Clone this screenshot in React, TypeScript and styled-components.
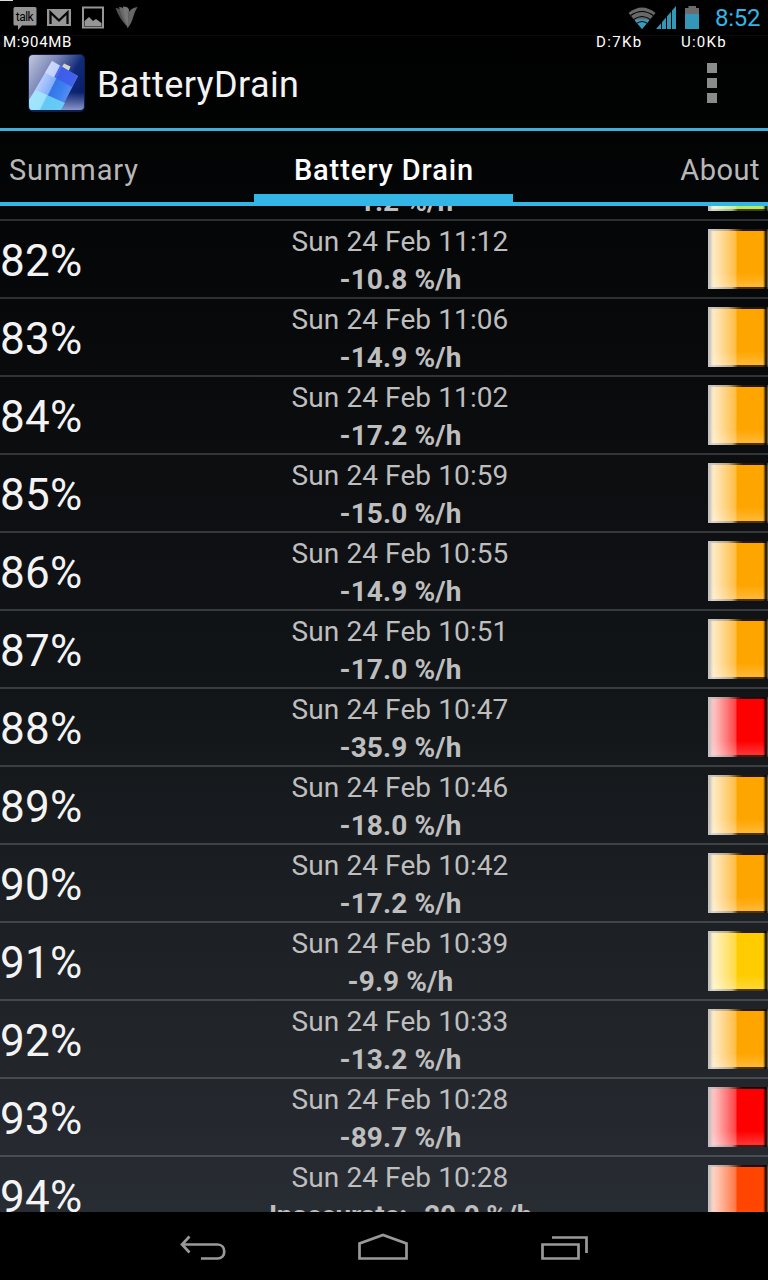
import React from "react";
import styled, { createGlobalStyle } from "styled-components";

const GlobalStyle = createGlobalStyle`
  * { box-sizing: border-box; }
  body { margin: 0; background: #000; overflow: hidden; font-family: Roboto, "Liberation Sans", sans-serif; }
`;

const Screen = styled.div`
  width: 768px;
  height: 1280px;
  display: flex;
  flex-direction: column;
  overflow: hidden;
  color: #f3f3f3;
  background: linear-gradient(#000 0, #020303 131px, #07080a 300px, #121518 690px, #1e2226 960px, #282c33 1212px);
`;

const StatusBar = styled.header`
  position: relative;
  flex: none;
  height: 36px;
  background: #000;
  border-bottom: 1px solid #0b0b0b;
  display: flex;
  justify-content: space-between;
`;

const Tray = styled.svg`
  display: block;
  flex: none;
`;

const StatusRight = styled.div`
  display: flex;
  padding-right: 8px;
`;

const Clock = styled.span`
  width: 45px;
  margin-left: 11px;
  font-size: 24px;
  line-height: 37px;
  letter-spacing: -0.25px;
  color: #33b5e5;
  white-space: nowrap;
`;

const Readout = styled.span<{ $left: number; $spacing: number }>`
  position: absolute;
  z-index: 2;
  left: ${(p) => p.$left}px;
  top: 33px;
  font-size: 15px;
  line-height: 18px;
  font-weight: 400;
  letter-spacing: ${(p) => p.$spacing}px;
  white-space: nowrap;
  color: #fff;
`;

const ActionBar = styled.div`
  flex: none;
  height: 95px;
  padding: 1px 51px 0 27px;
  border-bottom: 3px solid #41addb;
  display: flex;
  align-items: center;
`;

const AppTitle = styled.h1`
  flex: 1;
  margin: 5px 0 0 11px;
  font-size: 36px;
  line-height: 42px;
  font-weight: 400;
  letter-spacing: 0.4px;
`;

const Overflow = styled.div`
  display: grid;
  gap: 5px;
`;

const OverflowSquare = styled.i`
  width: 10px;
  height: 10px;
  background: #8b8b8b;
`;

const Tabs = styled.nav`
  flex: none;
  height: 75px;
  border-bottom: 4px solid #33b5e5;
  display: grid;
  grid-template-columns: 254px 259px 255px;
`;

const Tab = styled.div<{ $align: string; $active?: boolean }>`
  padding: 22px 8px 0 9px;
  text-align: ${(p) => p.$align};
  font-size: 29px;
  line-height: 34px;
  height: 71px;
  letter-spacing: ${(p) => (p.$align === "right" ? 0.5 : 0.9)}px;
  white-space: nowrap;
  color: ${(p) => (p.$active ? "#fff" : "#b8b8b8")};
  font-weight: ${(p) => (p.$active ? 500 : 400)};
  border-bottom: ${(p) => (p.$active ? "8px solid #33b5e5" : "0")};
`;

const List = styled.main`
  flex: none;
  height: 1006px;
  overflow: hidden;
`;

const Row = styled.div<{ $clipped?: boolean }>`
  height: 78px;
  margin-top: ${(p) => (p.$clipped ? "-63px" : "0")};
  border-bottom: 2px solid rgba(255, 255, 255, 0.17);
  display: grid;
  grid-template-columns: 92px 616px 60px;
`;

const Level = styled.div`
  font-size: 44px;
  line-height: 52px;
  padding-top: 14px;
  letter-spacing: 0.3px;
  white-space: nowrap;
`;

const Details = styled.div`
  color: #bebebe;
  text-align: center;
  font-size: 28px;
  line-height: 38px;
  padding-top: 2px;
`;

const Stamp = styled.div`
  height: 38px;
  letter-spacing: 0.1px;
`;

const Rate = styled.div<{ $tight: boolean }>`
  font-weight: 700;
  padding-left: 1px;
  letter-spacing: ${(p) => (p.$tight ? -0.28 : 0.1)}px;
`;

const Swatch = styled.div<{ $color: string }>`
  width: 60px;
  height: 60px;
  margin-top: 8px;
  background:
    linear-gradient(90deg, rgba(190,190,190,.9) 0 2px, rgba(190,190,190,.5) 3px, transparent 5px),
    linear-gradient(90deg, transparent 55px, rgba(0,0,0,.25) 56px, rgba(0,0,0,.95) 58px, rgba(100,100,100,.8) 60px),
    linear-gradient(90deg, rgba(200,200,200,.85), rgba(140,140,140,.6) 20px, rgba(0,0,0,.85) 35px) 0 0 / 100% 2px no-repeat,
    linear-gradient(90deg, rgba(220,220,220,.75), rgba(150,150,150,.7) 24px, rgba(40,20,10,.8) 30px) 0 100% / 100% 2px no-repeat,
    linear-gradient(transparent 44px, rgba(255,255,255,.2) 57px, rgba(255,255,255,.1)),
    linear-gradient(90deg, rgba(255,255,255,.82), rgba(255,255,255,.72) 8px, rgba(255,255,255,.26) 28px, transparent 29px),
    ${(p) => p.$color};
`;

const NavBar = styled.footer`
  flex: none;
  height: 68px;
  background: #000;
  display: flex;
  justify-content: center;
`;

const ORANGE = "#ffa500";
const entries = [
  ["", "", "-1.2 %/h", "#a5e635"],
  ["82%", "Sun 24 Feb 11:12", "-10.8 %/h", ORANGE],
  ["83%", "Sun 24 Feb 11:06", "-14.9 %/h", ORANGE],
  ["84%", "Sun 24 Feb 11:02", "-17.2 %/h", ORANGE],
  ["85%", "Sun 24 Feb 10:59", "-15.0 %/h", ORANGE],
  ["86%", "Sun 24 Feb 10:55", "-14.9 %/h", ORANGE],
  ["87%", "Sun 24 Feb 10:51", "-17.0 %/h", ORANGE],
  ["88%", "Sun 24 Feb 10:47", "-35.9 %/h", "#ff0000"],
  ["89%", "Sun 24 Feb 10:46", "-18.0 %/h", ORANGE],
  ["90%", "Sun 24 Feb 10:42", "-17.2 %/h", ORANGE],
  ["91%", "Sun 24 Feb 10:39", "-9.9 %/h", "#ffcc00"],
  ["92%", "Sun 24 Feb 10:33", "-13.2 %/h", ORANGE],
  ["93%", "Sun 24 Feb 10:28", "-89.7 %/h", "#ff0000"],
  ["94%", "Sun 24 Feb 10:28", "Inaccurate: -20.0 %/h", "#ff4500"],
];

function Notifications() {
  return (
    <Tray width="150" height="36" viewBox="0 0 150 36">
      <path d="M0 0h13v1H0z" fill="#ddd" />
      <path d="M15 7h20q1.500 0 1.500 1.500V24q0 1.500-1.500 1.500H22L18 30v-4.500h-3q-1.500 0-1.500-1.500V8.500Q13.500 7 15 7z" fill="#969696" />
      <text x="15.700" y="20.500" fontSize="12" fontWeight="400" fill="#000" textLength="18">talk</text>
      <path d="M47 9h24v17H47z" fill="#969696" />
      <path d="M50.500 24V12.500l8.500 8 8.500-8V24" fill="none" stroke="#080808" strokeWidth="2.300" />
      <path d="M83 7.500h20v20H83z" fill="none" stroke="#969696" strokeWidth="2" />
      <path d="M84.500 26v-5l4.500-4 4 4 3-2 5.500 4v3z" fill="#969696" />
      <path d="M115.500 8q4 0 6 3l5 15q-7-7-11-18z" fill="#505050" />
      <path d="M119 7q5 0 6 4l3 17q-5-7-9-21z" fill="#686868" />
      <path d="M123 6.500q5 0 6 3l-1 19q-4-12-5-22z" fill="#777" />
      <path d="M137.500 7q-7 1-9 6l-1 15q4-4 6-12 2-6 4-9z" fill="#666" />
    </Tray>
  );
}

function Connectivity() {
  return (
    <Tray width="76" height="36" viewBox="628 0 76 36">
      <defs>
        <clipPath id="wifi"><path d="M628.500 13q13.500-11 27 0L642 29z" /></clipPath>
      </defs>
      <g clipPath="url(#wifi)">
        <path d="M628 7h28v22h-28z" fill="#686868" />
        <path d="M635 19.500h14v9.500h-14z" fill="#389cbd" />
        <g fill="none" stroke="#000" strokeWidth="1.200">
          <path d="M630 16q12-9 24 0M633 20q9-7 18 0M636 24q6-5 12 0" />
        </g>
      </g>
      <path d="M656 29L676 6v23z" fill="#3597b8" />
      <path d="M661.500 21v8M666.500 15v14M671.500 10v19" stroke="#000" strokeWidth="1" />
      <path d="M688.500 6h7.500v2h3v6h-14V8h3.500z" fill="#6c6c6c" />
      <path d="M685 14h14v15h-14z" fill="#3597b8" />
    </Tray>
  );
}

function BatteryIcon() {
  return (
    <svg width="59" height="60" viewBox="0 0 59 60">
      <defs>
        <linearGradient id="tile" x1="0" y1="0" x2="1" y2=".65">
          <stop stopColor="#cbcfe1" /><stop offset=".4" stopColor="#7985b6" />
          <stop offset=".7" stopColor="#122b79" /><stop offset="1" stopColor="#061d69" />
        </linearGradient>
        <linearGradient id="shine" x1="0" y1="0" x2="0" y2="1">
          <stop offset=".65" stopColor="#a6b2e2" stopOpacity="0" /><stop offset="1" stopColor="#b1bbe9" stopOpacity=".9" />
        </linearGradient>
        <linearGradient id="cell" gradientUnits="userSpaceOnUse" x1="14" y1="28" x2="42" y2="42">
          <stop stopColor="#b4cbff" /><stop offset=".38" stopColor="#86aefa" />
          <stop offset=".42" stopColor="#3475e8" /><stop offset=".75" stopColor="#3c82f0" /><stop offset="1" stopColor="#5c8df0" />
        </linearGradient>
        <clipPath id="round"><rect x="2" y="2" width="55" height="55" rx="4" /></clipPath>
      </defs>
      <rect x="1" y="1" width="57" height="58" rx="5" fill="#101e48" />
      <g clipPath="url(#round)">
        <path d="M0 0h59v60H0z" fill="url(#tile)" />
        <path d="M0 0h59v60H0z" fill="url(#shine)" />
        <path d="M35 14l2-3.500 6.500 3-2 5z" fill="#d7d5ca" />
        <path d="M25 8l26 15-19 37H3L2 47z" fill="url(#cell)" />
        <path d="M33 12.500l18 10.500-6 11-18-10z" fill="#4058e8" opacity=".8" />
        <path d="M25 8l8 4.500-6 12-9-5z" fill="#dfe5ff" opacity=".6" />
        <path d="M9 37l29 13-6 10H3L2 47z" fill="#70dcf6" opacity=".8" />
        <path d="M9 37l11 5-9 18H3L2 47z" fill="#c5f2ff" opacity=".5" />
      </g>
    </svg>
  );
}

function NavigationIcons() {
  return (
    <svg width="430" height="68" viewBox="169 1212 430 68" fill="none" stroke="#999" strokeWidth="2.700">
      <path d="M182 1244.500h35.500c9 0 9 14 0 14h-16.500M189.500 1236.500l-7.500 8 7.500 8" />
      <path d="M359.500 1258.500v-15l23.500-8.500 23.500 8.500v15z" />
      <path d="M542.500 1244.500h36v14h-36zM552 1237.500h34.500v15.500" />
    </svg>
  );
}

export default function App() {
  return (
    <Screen>
      <GlobalStyle />
      <StatusBar>
        <Notifications />
        <StatusRight>
          <Connectivity />
          <Clock>8:52</Clock>
        </StatusRight>
        <Readout $left={3} $spacing={0.65}>M:904MB</Readout>
        <Readout $left={596} $spacing={1.35}>D:7Kb</Readout>
        <Readout $left={681} $spacing={1.25}>U:0Kb</Readout>
      </StatusBar>
      <ActionBar>
        <BatteryIcon />
        <AppTitle>BatteryDrain</AppTitle>
        <Overflow><OverflowSquare /><OverflowSquare /><OverflowSquare /></Overflow>
      </ActionBar>
      <Tabs>
        <Tab $align="left">Summary</Tab>
        <Tab $align="center" $active>Battery Drain</Tab>
        <Tab $align="right">About</Tab>
      </Tabs>
      <List>
        {entries.map(([level, stamp, rate, color], i) => (
          <Row key={i} $clipped={i === 0}>
            <Level>{level}</Level>
            <Details>
              <Stamp>{stamp}</Stamp>
              <Rate $tight={rate.length > 12}>{rate}</Rate>
            </Details>
            <Swatch $color={color} />
          </Row>
        ))}
      </List>
      <NavBar><NavigationIcons /></NavBar>
    </Screen>
  );
}
